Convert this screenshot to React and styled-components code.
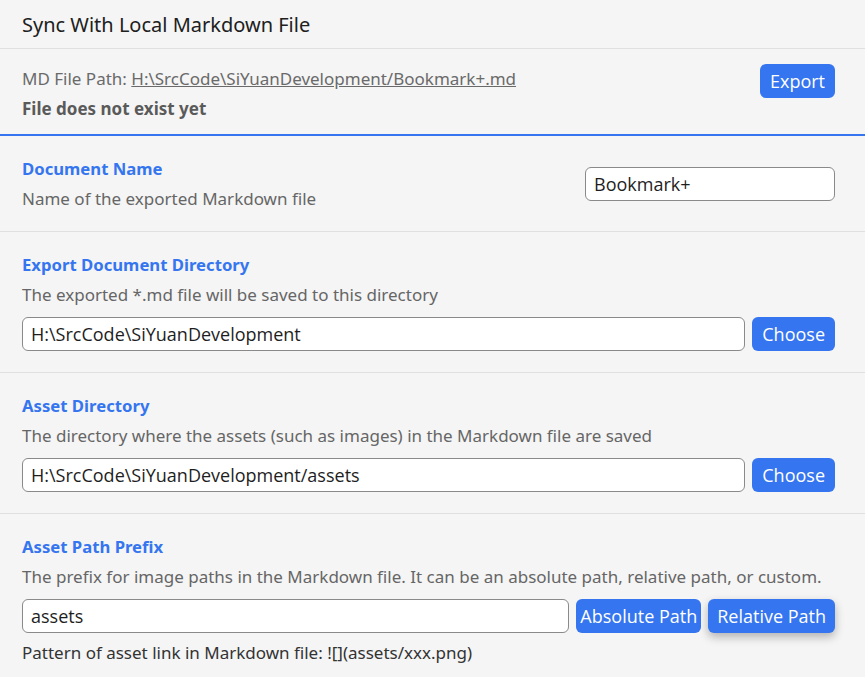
import React from 'react';
import styled, { createGlobalStyle } from 'styled-components';

const GlobalStyle = createGlobalStyle`
    html, body {
        margin: 0;
        padding: 0;
        background: #f5f5f5;
    }
    body {
        font-family: "Noto Sans", "Open Sans", sans-serif;
    }
`;

const Panel = styled.div`
    width: 865px;
    height: 677px;
    overflow: hidden;
    background: #f5f5f5;
    color: #333;
`;

const TitleBar = styled.div`
    height: 48px;
    display: flex;
    align-items: center;
    padding: 0 22px;
    border-bottom: 1px solid #e0e0e0;
    font-size: 20px;
    color: #202020;
`;

const Header = styled.div`
    display: flex;
    justify-content: space-between;
    align-items: flex-start;
    padding: 15px 30px 10px 22px;
    border-bottom: 2px solid #3575f0;
`;

const PathLine = styled.div`
    line-height: 30px;
    font-size: 17px;
    color: #6a6a6a;

    a {
        color: #6a6a6a;
        text-decoration: underline;
    }
`;

const Status = styled.div`
    line-height: 30px;
    font-size: 17px;
    font-weight: 700;
    color: #5a5a5a;
`;

const Section = styled.div`
    padding: 20px 30px ${p => (p.$inline ? 20 : 21)}px 22px;
    border-bottom: ${p => (p.$last ? 'none' : '1px solid #e0e0e0')};
    display: ${p => (p.$inline ? 'flex' : 'block')};
    align-items: center;
    justify-content: space-between;
`;

const Label = styled.div`
    font-size: 16.7px;
    line-height: 25px;
    font-weight: 700;
    color: #3575f0;
`;

const Desc = styled.div`
    margin-top: 5px;
    font-size: 17px;
    line-height: 25px;
    color: #666;
`;

const Row = styled.div`
    display: flex;
    gap: 7px;
    margin-top: 10px;
`;

const Input = styled.input`
    box-sizing: border-box;
    height: 34px;
    width: ${p => p.$width || 'auto'};
    flex: ${p => (p.$width ? 'none' : '1')};
    min-width: 0;
    padding: 0 8px;
    border: 1px solid #8a8a8a;
    border-radius: 6px;
    background: #fff;
    font-family: "Open Sans", "Noto Sans", sans-serif;
    font-size: 18px;
    color: #1e1e1e;
    outline: none;
`;

const Button = styled.button`
    box-sizing: border-box;
    height: 34px;
    padding: 0 ${p => p.$pad || 10}px;
    border: none;
    border-radius: 6px;
    background: #3575f0;
    color: #fff;
    font-family: "Open Sans", "Noto Sans", sans-serif;
    font-size: 18px;
    cursor: pointer;
    white-space: nowrap;
    box-shadow: ${p => (p.$raised ? '0 4px 10px rgba(0, 0, 0, 0.28)' : 'none')};
`;

const Hint = styled.div`
    margin-top: 8px;
    font-size: 17px;
    line-height: 24px;
    color: #333;
`;

function App() {
    return (
        <>
            <GlobalStyle />
            <Panel>
                <TitleBar>Sync With Local Markdown File</TitleBar>
                <Header>
                    <div>
                        <PathLine>
                            MD File Path: <a href="#">H:\SrcCode\SiYuanDevelopment/Bookmark+.md</a>
                        </PathLine>
                        <Status>File does not exist yet</Status>
                    </div>
                    <Button>Export</Button>
                </Header>

                <Section $inline>
                    <div>
                        <Label>Document Name</Label>
                        <Desc>Name of the exported Markdown file</Desc>
                    </div>
                    <Input $width="250px" defaultValue="Bookmark+" />
                </Section>

                <Section>
                    <Label>Export Document Directory</Label>
                    <Desc>The exported *.md file will be saved to this directory</Desc>
                    <Row>
                        <Input defaultValue="H:\SrcCode\SiYuanDevelopment" />
                        <Button>Choose</Button>
                    </Row>
                </Section>

                <Section>
                    <Label>Asset Directory</Label>
                    <Desc>The directory where the assets (such as images) in the Markdown file are saved</Desc>
                    <Row>
                        <Input defaultValue="H:\SrcCode\SiYuanDevelopment/assets" />
                        <Button>Choose</Button>
                    </Row>
                </Section>

                <Section $last>
                    <Label>Asset Path Prefix</Label>
                    <Desc>The prefix for image paths in the Markdown file. It can be an absolute path, relative path, or custom.</Desc>
                    <Row>
                        <Input defaultValue="assets" />
                        <Button $pad={4}>Absolute Path</Button>
                        <Button $pad={9} $raised>Relative Path</Button>
                    </Row>
                    <Hint>Pattern of asset link in Markdown file: ![](assets/xxx.png)</Hint>
                </Section>
            </Panel>
        </>
    );
}

export default App;
